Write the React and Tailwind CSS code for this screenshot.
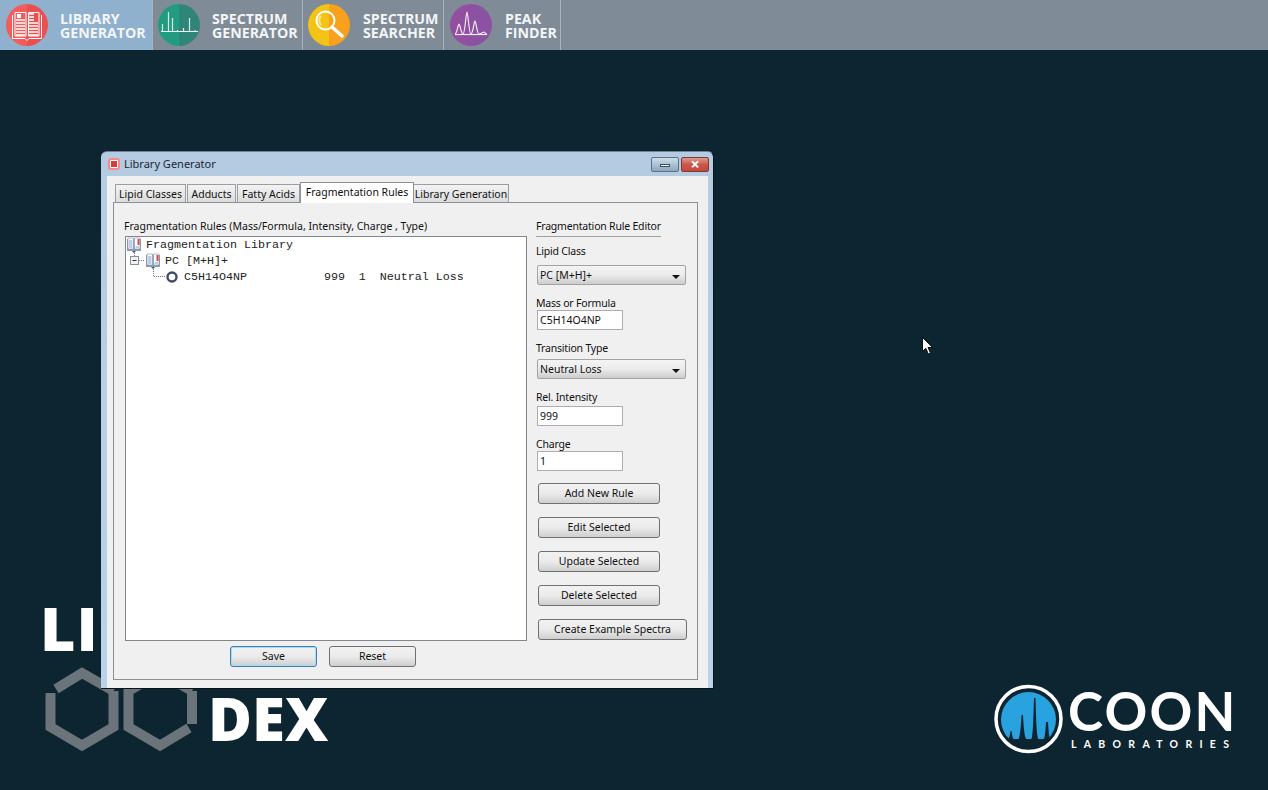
const ui = { fontFamily: '"Noto Sans", "Liberation Sans", sans-serif' };

function LibraryIcon() {
  return (
    <svg width="44" height="44" viewBox="0 0 44 44">
      <path d="M22 1a21 21 0 0 0 0 42z" fill="#f25c5d" />
      <path d="M22 1a21 21 0 0 1 0 42z" fill="#e9504f" />
      <path d="M7.500 12v23.500H20l2 2 2-2h12.500V12" fill="none" stroke="#fff" strokeWidth="1" />
      <path d="M10 9.500h11v23.500H10zM23.500 9.500H34v23.500H23.500z" fill="none" stroke="#fff" strokeWidth="1" />
      <path d="M11 17h9M11 20h9M11 23h9M11 26h9M11 29h9M11 32h9M24 20h9M24 23h9M24 26h9M24 29h9M24 32h9M24 11h5M24 14h5M24 17h5" stroke="#fff" strokeWidth="1.500" />
      <path d="M12 11h4v4h-4z" fill="#fff" />
    </svg>
  );
}

function SpectrumIcon() {
  return (
    <svg width="44" height="44" viewBox="0 0 44 44">
      <path d="M22 1a21 21 0 0 0 0 42z" fill="#229c80" />
      <path d="M22 1a21 21 0 0 1 0 42z" fill="#2f8579" />
      <path d="M4 28.500h37" stroke="#fff" strokeWidth="1.200" />
      <path d="M5.500 28v-7M11.500 28V9M15.500 28V15M20.500 28v-1M26.500 28v-3M32.500 28V15M38 28v-1" stroke="#d8ece6" strokeWidth="1.200" />
    </svg>
  );
}

function SearcherIcon() {
  return (
    <svg width="44" height="44" viewBox="0 0 44 44">
      <path d="M22 1a21 21 0 0 0 0 42z" fill="#f3c416" />
      <path d="M22 1a21 21 0 0 1 0 42z" fill="#f9a01d" />
      <circle cx="18.500" cy="17.500" r="9" fill="none" stroke="#fff" strokeWidth="2" />
      <path d="M14 13a7 7 0 0 0 0 9" fill="none" stroke="#f9e39a" strokeWidth="2" />
      <path d="M25 24l10 9" stroke="#fff" strokeWidth="3.500" strokeLinecap="round" />
    </svg>
  );
}

function PeakIcon() {
  return (
    <svg width="44" height="44" viewBox="0 0 44 44">
      <path d="M22 1a21 21 0 0 0 0 42z" fill="#924f9f" />
      <path d="M22 1a21 21 0 0 1 0 42z" fill="#8b52a1" />
      <path d="M6 31.500h32" stroke="#f3e9f5" strokeWidth="1.200" />
      <path d="M6 31C8 31 9 21 10 21C11 21 12 31 14 31C16 31 17 9 18 9C19 9 20 31 22 31C24 31 25 18 26 18C27 18 28 31 30 31C32 31 34 29 35 29C36 29 36 31 38 31" fill="none" stroke="#f3e9f5" strokeWidth="1.200" />
    </svg>
  );
}

const navItems = [
  { top: 'LIBRARY', bottom: 'GENERATOR', Icon: LibraryIcon, cls: 'w-[153px] pl-[5px] gap-[11px] bg-[#90b1cd]' },
  { top: 'SPECTRUM', bottom: 'GENERATOR', Icon: SpectrumIcon, cls: 'w-[150px] pl-[4px] gap-[11px]' },
  { top: 'SPECTRUM', bottom: 'SEARCHER', Icon: SearcherIcon, cls: 'w-[141px] pl-[4px] gap-[12px]' },
  { top: 'PEAK', bottom: 'FINDER', Icon: PeakIcon, cls: 'w-[117px] pl-[5px] gap-[12px]' },
];

function NavBar() {
  return (
    <div className="flex h-[50px] bg-[#808b98]">
      {navItems.map(({ top, bottom, Icon, cls }) => (
        <div key={top + bottom} className={`flex h-full items-center border-r border-[#a9b2bb] ${cls}`}>
          <Icon />
          <div
            className="pt-[1px] text-[14.2px] font-bold leading-[14px] text-[#f3f5f7]"
            style={{ fontFamily: '"Open Sans", sans-serif' }}
          >
            <div>{top}</div>
            <div>{bottom}</div>
          </div>
        </div>
      ))}
    </div>
  );
}

function Tab({ label, w, active }) {
  return active ? (
    <div className="relative z-10 -mx-px mb-[-1px] flex h-[21px] items-center justify-center whitespace-nowrap border border-b-0 border-[#8c8f94] bg-white" style={{ width: w }}>
      {label}
    </div>
  ) : (
    <div className="mr-[1px] flex h-[18px] items-center justify-center whitespace-nowrap border border-b-0 border-[#9a9da1] bg-gradient-to-b from-[#f3f3f3] to-[#dcdcdc] pt-[3px]" style={{ width: w }}>
      {label}
    </div>
  );
}

function Button({ label, cls, focused }) {
  return (
    <div
      className={`flex h-[21px] items-center justify-center rounded-[3px] border bg-gradient-to-b from-[#f2f2f2] via-[#ebebeb] to-[#cfcfcf] ${
        focused ? 'border-[#3c7fb1] shadow-[inset_0_0_0_1px_#a8dcf3]' : 'border-[#707070]'
      } ${cls}`}
    >
      {label}
    </div>
  );
}

function Select({ value, cls }) {
  return (
    <div className={`ml-px flex h-[20px] w-[149px] items-center justify-between rounded-[2px] border border-[#a3a3a3] bg-gradient-to-b from-[#f4f4f4] via-[#ebebeb] to-[#cdcdcd] pl-[2px] pr-[5px] pt-[1px] ${cls}`}>
      <span>{value}</span>
      <svg width="8" height="4" viewBox="0 0 8 4" className="mt-[2px]">
        <path d="M0 0h8L4 4z" fill="#111" />
      </svg>
    </div>
  );
}

function Input({ value, cls }) {
  return (
    <div className={`ml-px flex h-[20px] w-[86px] items-center border border-[#abadb3] bg-white pl-[2px] pt-[1px] ${cls}`}>
      {value}
    </div>
  );
}

function BookGlyph() {
  return (
    <>
      <path d="M1 2h14v12H1z" fill="#8d9cb6" />
      <path d="M2 1h5.500v11H2zM8.500 1H14v11H8.500z" fill="#fff" stroke="#7d8ba3" strokeWidth="0.6" />
      <path d="M3 4h3.500M3 6h3.500M3 8h3.500M3 10h3.500" stroke="#7f9ccc" strokeWidth="1" />
      <path d="M11.500 2h2v6h-2z" fill="#d84545" />
      <path d="M9.500 10h3.500" stroke="#7f9ccc" strokeWidth="1" />
      <path d="M6 14h4l-2 2z" fill="#3d5578" />
    </>
  );
}

function TreeRows() {
  const mono = { fontFamily: '"Liberation Mono", monospace' };
  return (
    <div className="whitespace-pre text-[11.67px] leading-[16px] text-[#222]" style={mono}>
      <div className="flex h-4">
        <svg width="20" height="16" viewBox="0 0 20 16" className="shrink-0"><BookGlyph /></svg>
        <span>Fragmentation Library</span>
      </div>
      <div className="flex h-4">
        <svg width="39" height="16" viewBox="0 0 39 16" className="shrink-0">
          <path d="M8.500 0v3M13 7.500h6" stroke="#777" strokeDasharray="1 1" />
          <rect x="4.500" y="3.500" width="8" height="8" fill="#eef0f2" stroke="#8b9097" />
          <path d="M6.500 7.500h4" stroke="#333" />
          <g transform="translate(19 0)"><BookGlyph /></g>
        </svg>
        <span>PC [M+H]+</span>
      </div>
      <div className="flex h-4">
        <svg width="58" height="16" viewBox="0 0 58 16" className="shrink-0">
          <path d="M27.500 0v7.500h12" fill="none" stroke="#777" strokeDasharray="1 1" />
          <circle cx="46" cy="8" r="4.500" fill="#fff" stroke="#3d4a70" strokeWidth="2.400" />
        </svg>
        <span>C5H14O4NP           999  1  Neutral Loss</span>
      </div>
    </div>
  );
}

function RuleEditor() {
  const label = 'mt-[11px] leading-[14px] tracking-[-0.2px]';
  return (
    <div className="w-[152px] whitespace-nowrap pt-[16px]">
      <div className="h-[18px] w-[125px] border-b border-[#a0a0a0] leading-[14px] tracking-[-0.2px]">Fragmentation Rule Editor</div>
      <div className="mt-[7px] leading-[14px] tracking-[-0.2px]">Lipid Class</div>
      <Select value="PC [M+H]+" cls="mt-[7px]" />
      <div className={label}>Mass or Formula</div>
      <Input value="C5H14O4NP" />
      <div className={label}>Transition Type</div>
      <Select value="Neutral Loss" cls="mt-[4px]" />
      <div className={label}>Rel. Intensity</div>
      <Input value="999" cls="mt-[2px]" />
      <div className={label}>Charge</div>
      <Input value="1" />
      <div className="ml-[2px] mt-[12px] flex flex-col gap-[13px]">
        <Button label="Add New Rule" cls="w-[122px]" />
        <Button label="Edit Selected" cls="w-[122px]" />
        <Button label="Update Selected" cls="w-[122px]" />
        <Button label="Delete Selected" cls="w-[122px]" />
        <Button label="Create Example Spectra" cls="w-[149px]" />
      </div>
    </div>
  );
}

function LibraryWindow() {
  return (
    <div
      className="absolute left-[101px] top-[151px] flex h-[538px] w-[613px] flex-col rounded-t-[6px] border-b border-r border-t border-[#0b1418] border-t-[#6d8294] bg-gradient-to-b from-[#b4cbe2] to-[#b9d3ec]"
      style={ui}
    >
      <div className="flex h-[24px] shrink-0 items-center pl-[7px] pr-[4px]">
        <span className="h-[12px] w-[12px] rounded-[3px] border-2 border-[#f28b8b] bg-[#c9423f] shadow-[inset_0_0_0_1px_#fff]" />
        <span className="ml-[4px] pt-[1px] text-[11px] text-[#1c2733]">Library Generator</span>
        <div className="ml-auto flex gap-[2px]">
          <div className="flex h-[15px] w-[28px] items-center justify-center rounded-[2px] border border-[#5c7187] bg-gradient-to-b from-[#cfdde9] to-[#8da7bf]">
            <span className="mt-[3px] h-[3px] w-[10px] border border-[#3c4a58] bg-white" />
          </div>
          <div className="flex h-[15px] w-[28px] items-center justify-center rounded-[2px] border border-[#7a3b3b] bg-gradient-to-b from-[#dd9a8e] via-[#c9584b] to-[#c9453a] text-[16px] font-bold leading-none text-white">
            ×
          </div>
        </div>
      </div>
      <div className="ml-[6px] mr-[5px] flex-1 bg-[#f0f0f0] pl-[6px] pr-[10px] pt-[6px] text-[10.5px] text-[#111]">
        <div className="flex h-[20px] items-end pl-[2px]">
          <Tab label="Lipid Classes" w={71} />
          <Tab label="Adducts" w={49} />
          <Tab label="Fatty Acids" w={63} />
          <Tab label="Fragmentation Rules" w={114} active />
          <Tab label="Library Generation" w={96} />
        </div>
        <div className="flex h-[478px] gap-[9px] border border-[#8c8f94] pl-[10px]">
          <div className="w-[403px] pt-[16px]">
            <div className="whitespace-nowrap leading-[14px]">Fragmentation Rules (Mass/Formula, Intensity, Charge , Type)</div>
            <div className="ml-px mt-[3px] h-[405px] w-[402px] border border-[#82878f] bg-white">
              <TreeRows />
            </div>
            <div className="ml-[106px] mt-[5px] flex gap-[12px]">
              <Button label="Save" cls="w-[87px]" focused />
              <Button label="Reset" cls="w-[87px]" />
            </div>
          </div>
          <RuleEditor />
        </div>
      </div>
    </div>
  );
}

function LipidexLogo() {
  const bold = { fontFamily: '"Open Sans", sans-serif' };
  return (
    <div className="absolute left-[40px] top-[590px] h-[170px] w-[300px] text-white" style={bold}>
      <div className="absolute left-[0px] top-[-2px] text-[61px] font-extrabold leading-[80px] tracking-[1px]">LIPID</div>
      <svg width="170" height="100" viewBox="40 660 170 100" className="absolute left-0 top-[70px]">
        <g fill="none" stroke="#6b747b" strokeWidth="10">
          <path d="M56 689L82 673L113.500 691" />
          <path d="M50.500 693V727L82 745.500L113.500 727V691" />
          <path d="M192 691L160 673L128.500 691V727L160 745.500L189 728" />
          <path d="M192 724V691" />
        </g>
      </svg>
      <div className="absolute left-[168px] top-[88px] text-[60px] font-extrabold leading-[80px]">DEX</div>
    </div>
  );
}

function CoonLogo() {
  return (
    <div className="absolute left-[994px] top-[684px] flex h-[70px] w-[250px] items-center text-white">
      <svg width="70" height="70" viewBox="994 684 70 70" className="shrink-0">
        <circle cx="1028.500" cy="719" r="32.500" fill="none" stroke="#fff" strokeWidth="3.500" />
        <path d="M1009 739A27.500 27.500 0 1 1 1048 739z" fill="#29a3df" />
        <path
          d="M1007 739.500C1009 739.500 1010 735 1010.500 731H1011.500C1012 735 1013 739 1014 739.500ZM1018 739.500C1020 739.500 1021 725 1021.500 715H1023C1023.500 725 1024.500 739.500 1027 739.500ZM1031 739.500C1033 739.500 1033.500 715 1034 698H1035.500C1036 715 1036.500 739.500 1039 739.500ZM1043 739.500C1045 739.500 1045.500 730 1046 722H1048C1048.500 730 1049 739.500 1051 739.500Z"
          fill="#0d2530"
        />
      </svg>
      <div className="ml-[4px]" style={{ fontFamily: 'Lato, sans-serif' }}>
        <div className="mt-[-4px] text-[53px] font-bold leading-[52px] tracking-[2.2px]">COON</div>
        <div className="mt-[2px] pl-[3px] text-[10.5px] font-bold leading-[11px] tracking-[7.3px]">LABORATORIES</div>
      </div>
    </div>
  );
}

function Cursor() {
  return (
    <svg width="14" height="20" viewBox="0 0 14 20" className="absolute left-[921px] top-[336px]">
      <path d="M1.500 1.500V15.500L4.800 12.300L7.300 18L9.500 17L7 11.500H11.500z" fill="#fff" stroke="#111" strokeWidth="1" />
    </svg>
  );
}

export default function App() {
  return (
    <div className="relative h-[790px] w-[1268px] overflow-hidden bg-[#0d2530]">
      <NavBar />
      <LipidexLogo />
      <CoonLogo />
      <LibraryWindow />
      <Cursor />
    </div>
  );
}
